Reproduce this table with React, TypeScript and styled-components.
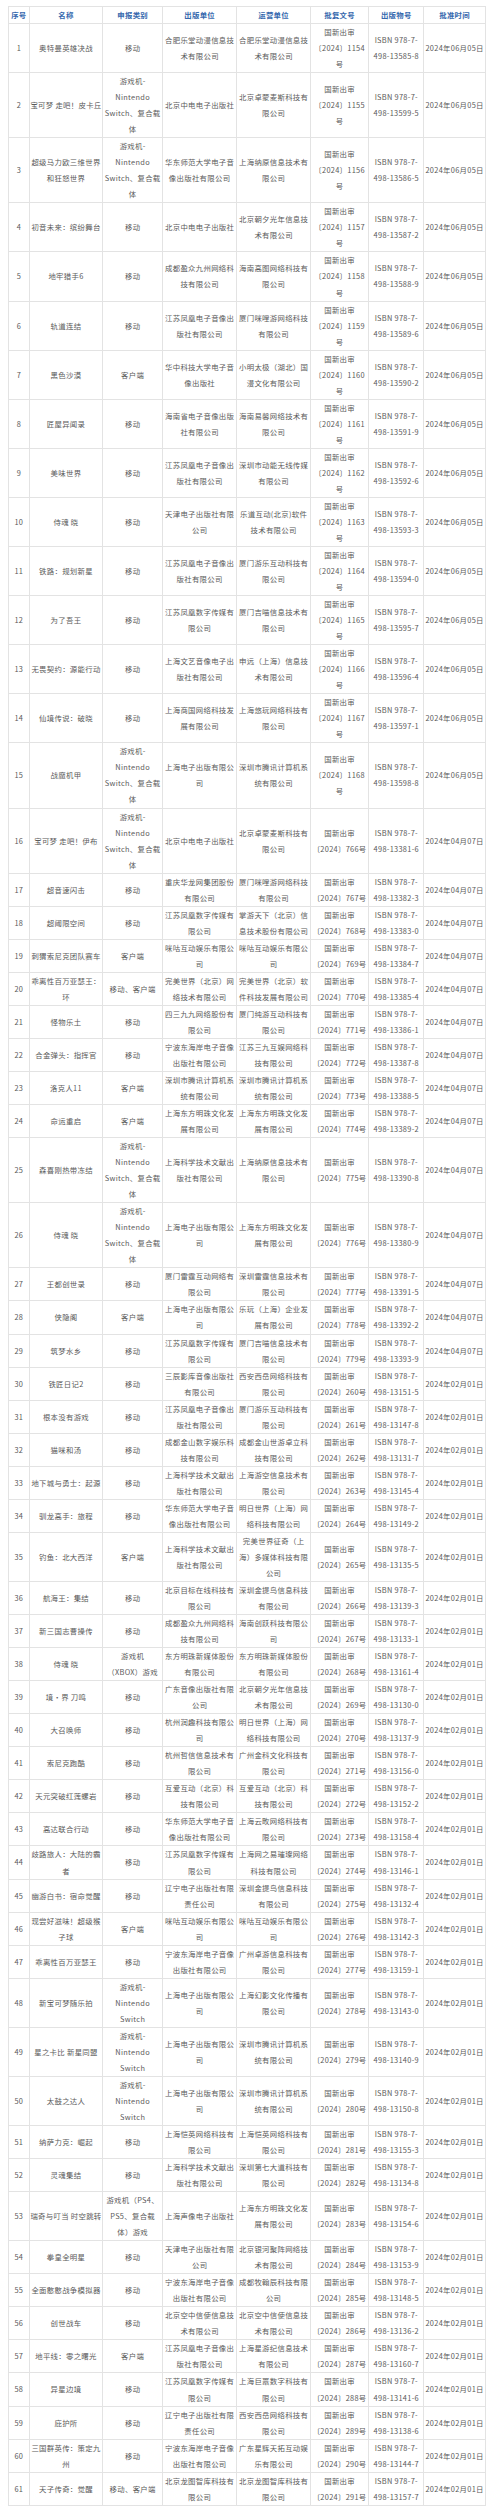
import React from 'react'
import styled, { createGlobalStyle } from 'styled-components'

const GlobalStyle = createGlobalStyle`
  html, body {
    margin: 0;
    padding: 0;
    background: #fff;
  }
  body {
    font-family: "Noto Sans CJK SC", "Noto Sans", sans-serif;
  }
`

// 申报类别 repeated values
const NS4 = '游戏机-\nNintendo\nSwitch、复合载\n体'
const NS3 = '游戏机-\nNintendo\nSwitch'
const MOB = '移动'
const PC = '客户端'

// [name, category, publisher, operator, approvalNo, isbnTail, date]
type Row = [string, string, string, string, number, string, string]

const D1 = '2024年06月05日'
const D2 = '2024年04月07日'
const D3 = '2024年02月01日'

const rows: Row[] = [
  ['奥特曼英雄决战', MOB, '合肥乐堂动漫信息技\n术有限公司', '合肥乐堂动漫信息技\n术有限公司', 1154, '13585-8', D1],
  ['宝可梦 走吧！皮卡丘', NS4, '北京中电电子出版社', '北京卓蒙麦斯科技有\n限公司', 1155, '13599-5', D1],
  ['超级马力欧三维世界\n和狂怒世界', NS4, '华东师范大学电子音\n像出版社有限公司', '上海纳原信息技术有\n限公司', 1156, '13586-5', D1],
  ['初音未来：缤纷舞台', MOB, '北京中电电子出版社', '北京朝夕光年信息技\n术有限公司', 1157, '13587-2', D1],
  ['地牢猎手6', MOB, '成都盈众九州网络科\n技有限公司', '海南高图网络科技有\n限公司', 1158, '13588-9', D1],
  ['轨道连结', MOB, '江苏凤凰电子音像出\n版社有限公司', '厦门咪哩游网络科技\n有限公司', 1159, '13589-6', D1],
  ['黑色沙漠', PC, '华中科技大学电子音\n像出版社', '小明太极（湖北）国\n漫文化有限公司', 1160, '13590-2', D1],
  ['匠屋异闻录', MOB, '海南省电子音像出版\n社有限公司', '海南易馨网络技术有\n限公司', 1161, '13591-9', D1],
  ['美味世界', MOB, '江苏凤凰电子音像出\n版社有限公司', '深圳市动能无线传媒\n有限公司', 1162, '13592-6', D1],
  ['侍魂 晓', MOB, '天津电子出版社有限\n公司', '乐道互动(北京)软件\n技术有限公司', 1163, '13593-3', D1],
  ['铁路：规划新星', MOB, '江苏凤凰电子音像出\n版社有限公司', '厦门游乐互动科技有\n限公司', 1164, '13594-0', D1],
  ['为了吾王', MOB, '江苏凤凰数字传媒有\n限公司', '厦门吉喵信息技术有\n限公司', 1165, '13595-7', D1],
  ['无畏契约：源能行动', MOB, '上海文艺音像电子出\n版社有限公司', '申远（上海）信息技\n术有限公司', 1166, '13596-4', D1],
  ['仙境传说：破晓', MOB, '上海商国网络科技发\n展有限公司', '上海悠玩网络科技有\n限公司', 1167, '13597-1', D1],
  ['战魔机甲', NS4, '上海电子出版有限公\n司', '深圳市腾讯计算机系\n统有限公司', 1168, '13598-8', D1],
  ['宝可梦 走吧！伊布', NS4, '北京中电电子出版社', '北京卓蒙麦斯科技有\n限公司', 766, '13381-6', D2],
  ['超音速闪击', MOB, '重庆华龙网集团股份\n有限公司', '厦门咪哩游网络科技\n有限公司', 767, '13382-3', D2],
  ['超阈限空间', MOB, '江苏凤凰数字传媒有\n限公司', '掌游天下（北京）信\n息技术股份有限公司', 768, '13383-0', D2],
  ['刺猬索尼克团队赛车', PC, '咪咕互动娱乐有限公\n司', '咪咕互动娱乐有限公\n司', 769, '13384-7', D2],
  ['乖离性百万亚瑟王：\n环', '移动、客户端', '完美世界（北京）网\n络技术有限公司', '完美世界（北京）软\n件科技发展有限公司', 770, '13385-4', D2],
  ['怪物乐土', MOB, '四三九九网络股份有\n限公司', '厦门纯游互动科技有\n限公司', 771, '13386-1', D2],
  ['合金弹头：指挥官', MOB, '宁波东海岸电子音像\n出版社有限公司', '江苏三九互娱网络科\n技有限公司', 772, '13387-8', D2],
  ['洛克人11', PC, '深圳市腾讯计算机系\n统有限公司', '深圳市腾讯计算机系\n统有限公司', 773, '13388-5', D2],
  ['命运重启', PC, '上海东方明珠文化发\n展有限公司', '上海东方明珠文化发\n展有限公司', 774, '13389-2', D2],
  ['森喜刚热带冻结', NS4, '上海科学技术文献出\n版社有限公司', '上海纳原信息技术有\n限公司', 775, '13390-8', D2],
  ['侍魂 晓', NS4, '上海电子出版有限公\n司', '上海东方明珠文化发\n展有限公司', 776, '13380-9', D2],
  ['王都创世录', MOB, '厦门雷霆互动网络有\n限公司', '深圳雷霆信息技术有\n限公司', 777, '13391-5', D2],
  ['侠隐阁', PC, '上海电子出版有限公\n司', '乐玩（上海）企业发\n展有限公司', 778, '13392-2', D2],
  ['筑梦水乡', MOB, '江苏凤凰数字传媒有\n限公司', '厦门吉喵信息技术有\n限公司', 779, '13393-9', D2],
  ['铁匠日记2', MOB, '三辰影库音像出版社\n有限公司', '西安西岳网络科技有\n限公司', 260, '13151-5', D3],
  ['根本没有游戏', MOB, '江苏凤凰电子音像出\n版社有限公司', '厦门游乐互动科技有\n限公司', 261, '13147-8', D3],
  ['猫咪和汤', MOB, '成都金山数字娱乐科\n技有限公司', '成都金山世游卓立科\n技有限公司', 262, '13131-7', D3],
  ['地下城与勇士：起源', MOB, '上海科学技术文献出\n版社有限公司', '上海游空信息技术有\n限公司', 263, '13145-4', D3],
  ['驯龙高手：旅程', MOB, '华东师范大学电子音\n像出版社有限公司', '明日世界（上海）网\n络科技有限公司', 264, '13149-2', D3],
  ['钓鱼：北大西洋', PC, '上海科学技术文献出\n版社有限公司', '完美世界征奇（上\n海）多媒体科技有限\n公司', 265, '13135-5', D3],
  ['航海王：集结', MOB, '北京目标在线科技有\n限公司', '深圳金提鸟信息科技\n有限公司', 266, '13139-3', D3],
  ['新三国志曹操传', MOB, '成都盈众九州网络科\n技有限公司', '海南创跃科技有限公\n司', 267, '13133-1', D3],
  ['侍魂 晓', '游戏机\n（XBOX）游戏', '东方明珠新媒体股份\n有限公司', '东方明珠新媒体股份\n有限公司', 268, '13161-4', D3],
  ['境•界 刀鸣', MOB, '广东音像出版社有限\n公司', '北京朝夕光年信息技\n术有限公司', 269, '13130-0', D3],
  ['大召唤师', MOB, '杭州润趣科技有限公\n司', '明日世界（上海）网\n络科技有限公司', 270, '13137-9', D3],
  ['索尼克跑酷', MOB, '杭州哲信信息技术有\n限公司', '广州金科文化科技有\n限公司', 271, '13156-0', D3],
  ['天元突破红莲螺岩', MOB, '互爱互动（北京）科\n技有限公司', '互爱互动（北京）科\n技有限公司', 272, '13152-2', D3],
  ['高达联合行动', MOB, '华东师范大学电子音\n像出版社有限公司', '上海云畋网络科技有\n限公司', 273, '13158-4', D3],
  ['歧路旅人：大陆的霸\n者', MOB, '江苏凤凰数字传媒有\n限公司', '上海网之易璀璨网络\n科技有限公司', 274, '13146-1', D3],
  ['幽游白书：宿命觉醒', MOB, '辽宁电子出版社有限\n责任公司', '深圳金提鸟信息科技\n有限公司', 275, '13132-4', D3],
  ['现尝好滋味！超级猴\n子球', PC, '咪咕互动娱乐有限公\n司', '咪咕互动娱乐有限公\n司', 276, '13142-3', D3],
  ['乖离性百万亚瑟王', MOB, '宁波东海岸电子音像\n出版社有限公司', '广州卓游信息科技有\n限公司', 277, '13159-1', D3],
  ['新宝可梦随乐拍', NS3, '上海电子出版有限公\n司', '上海幻影文化传播有\n限公司', 278, '13143-0', D3],
  ['星之卡比 新星同盟', NS3, '上海电子出版有限公\n司', '深圳市腾讯计算机系\n统有限公司', 279, '13140-9', D3],
  ['太鼓之达人', NS3, '上海电子出版有限公\n司', '深圳市腾讯计算机系\n统有限公司', 280, '13150-8', D3],
  ['纳萨力克：崛起', MOB, '上海恺英网络科技有\n限公司', '上海恺英网络科技有\n限公司', 281, '13155-3', D3],
  ['灵魂集结', MOB, '上海科学技术文献出\n版社有限公司', '深圳第七大道科技有\n限公司', 282, '13134-8', D3],
  ['瑞奇与叮当 时空跳转', '游戏机（PS4、\nPS5、复合载\n体）游戏', '上海声像电子出版社', '上海东方明珠文化发\n展有限公司', 283, '13154-6', D3],
  ['拳皇全明星', MOB, '天津电子出版社有限\n公司', '北京银河聚阵网络技\n术有限公司', 284, '13153-9', D3],
  ['全面憨憨战争模拟器', MOB, '宁波东海岸电子音像\n出版社有限公司', '成都牧翰辰科技有限\n公司', 285, '13148-5', D3],
  ['创世战车', MOB, '北京空中信使信息技\n术有限公司', '北京空中信使信息技\n术有限公司', 286, '13136-2', D3],
  ['地平线：零之曙光', PC, '江苏凤凰电子音像出\n版社有限公司', '上海星游纪信息技术\n有限公司', 287, '13160-7', D3],
  ['异星边境', MOB, '江苏凤凰数字传媒有\n限公司', '上海巨鼍数字科技有\n限公司', 288, '13141-6', D3],
  ['庇护所', MOB, '辽宁电子出版社有限\n责任公司', '西安西岳网络科技有\n限公司', 289, '13138-6', D3],
  ['三国群英传：策定九\n州', MOB, '宁波东海岸电子音像\n出版社有限公司', '广东星辉天拓互动娱\n乐有限公司', 290, '13144-7', D3],
  ['天子传奇：觉醒', '移动、客户端', '北京龙图智库科技有\n限公司', '北京龙图智库科技有\n限公司', 291, '13157-7', D3],
]

const headers = ['序号', '名称', '申报类别', '出版单位', '运营单位', '批复文号', '出版物号', '批准时间']
const colWidths = [20.67, 73.67, 59.67, 74.33, 73.67, 58.33, 55, 61.67]

// four-digit numbers don't fit on one line with 号
const approval = (n: number) =>
  n >= 1000 ? `国新出审\n〔2024〕${n}\n号` : `国新出审\n〔2024〕${n}号`

const App = () => {
  return (
    <>
      <GlobalStyle />
      <Page>
        <Table>
          <colgroup>
            {colWidths.map((w, i) => (
              <col key={i} style={{ width: w }} />
            ))}
          </colgroup>
          <thead>
            <tr>
              {headers.map((h) => (
                <HeadCell key={h}>{h}</HeadCell>
              ))}
            </tr>
          </thead>
          <tbody>
            {rows.map((r, i) => (
              <tr key={i}>
                <Cell>{i + 1}</Cell>
                <Cell>{r[0]}</Cell>
                <Cell>{r[1]}</Cell>
                <Cell>{r[2]}</Cell>
                <Cell>{r[3]}</Cell>
                <Cell>{approval(r[4])}</Cell>
                <Cell>{`ISBN 978-7-\n498-${r[5]}`}</Cell>
                <Cell>{r[6]}</Cell>
              </tr>
            ))}
          </tbody>
        </Table>
      </Page>
    </>
  )
}

export default App

const Page = styled.div`
  width: 500px;
  padding: 6px 0 0 8px;
  box-sizing: border-box;
`

const Table = styled.table`
  width: 477px;
  table-layout: fixed;
  border-collapse: collapse;
  font-size: 7.4px;
  letter-spacing: 0.3px;
  color: #5a5a5a;
`

const HeadCell = styled.th`
  border: 1px solid #e3e3e3;
  padding: 0;
  height: 16px;
  line-height: 16px;
  color: #3467ad;
  font-weight: bold;
  text-align: center;
  vertical-align: middle;
`

const Cell = styled.td`
  border: 1px solid #e3e3e3;
  padding: 0;
  line-height: 16.03px;
  text-align: center;
  vertical-align: middle;
  white-space: pre;
  overflow: hidden;
`
